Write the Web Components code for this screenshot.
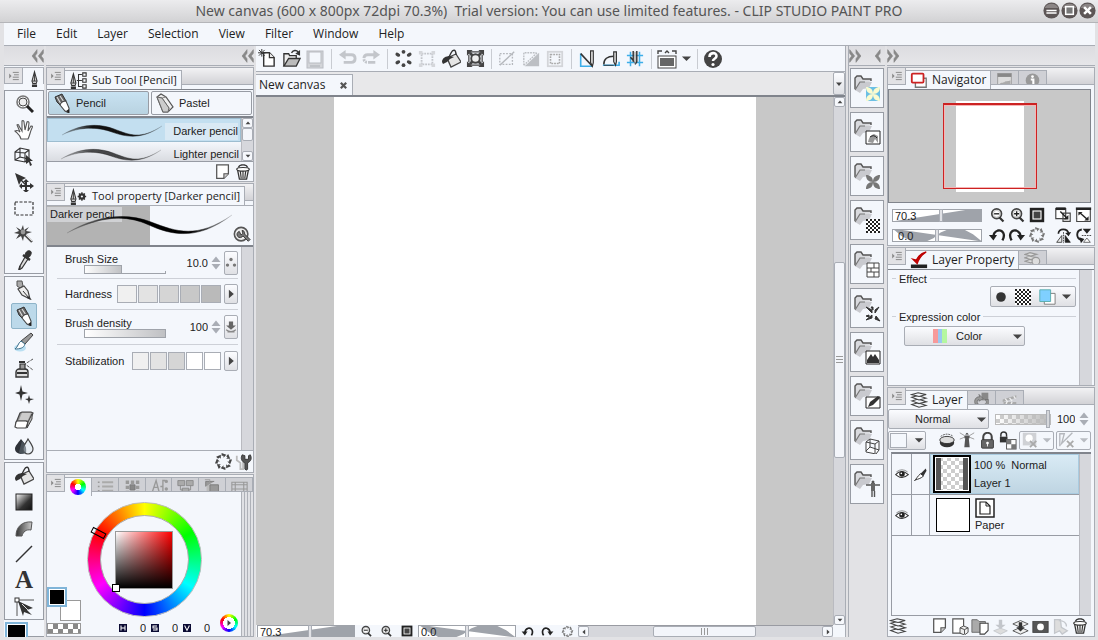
<!DOCTYPE html>
<html lang="en">
<head>
<meta charset="utf-8">
<meta name="viewport" content="width=device-width, initial-scale=1">
<title>CLIP STUDIO PAINT PRO</title>
<style>
  html, body { height: 100%; margin: 0; }
  body {
    --face: #f4f7fc; --line: #a9adb5; --dark: #80848c; --rail: #d6d7dc; --dock: #e2e2e5; --ink: #222;
    font: 12px/16px "Open Sans", "Noto Sans", sans-serif; color: var(--ink);
  }
</style>
</head>
<body>
<studio-app></studio-app>
<script>
const BASE = `*{box-sizing:border-box}
button,select,input{font:inherit;color:inherit;margin:0;padding:0;border:0;background:none;border-radius:0;appearance:none;outline:0}
button{display:flex;align-items:center;justify-content:center}
ul{list-style:none;margin:0;padding:0}
:host{display:block}
.ms{font-family:"Liberation Sans",Arial,sans-serif;font-size:11px}
.btn{border:1px solid #a9adb5;border-radius:2px;background:linear-gradient(#fbfcff,#dfe0e4)}
`;
function define(name, css, html, setup) {
  const t = document.createElement('template');
  t.innerHTML = `<style>${BASE}${css}</style>${html}`;
  customElements.define(name, class extends HTMLElement {
    constructor() {
      super();
      this.attachShadow({ mode: 'open' }).append(t.content.cloneNode(true));
    }
    connectedCallback() { if (setup) setup.call(this, this.shadowRoot); }
  });
}

/* ---------- icons ---------- */
const FOLDER = '<path d="M1 14V3l2-2h4l2 3h8v2" fill="#d9dade" stroke="#555" stroke-width="1.4"/><path d="M1 15L5 7h13l-3 6-6 1-3 4z" fill="#c9cacf"/><path d="M1 15L6 7h5" fill="none" stroke="#777" stroke-width="1.2"/>';
const TUBE = '<path d="M7 13l3-11 3 11-1 3H8z" fill="#ccc" stroke="#333" stroke-width="1.2"/><path d="M10 3v10M7 13h6" stroke="#333"/><path d="M7 17h6v3H7z" fill="#333"/>';
const LENS = '<circle cx="9" cy="8" r="5.7" fill="#fff" stroke="#444" stroke-width="2"/><circle cx="9" cy="8" r="4" fill="none" stroke="#999" stroke-width=".6"/><path d="M12 12l5 5" stroke="#333" stroke-width="2.6"/>';
const CROSS4 = c => `<g fill="${c}"><path d="M12 12c4 0 7 2 7 7-5 0-7-3-7-7zM26 12c-4 0-7 2-7 7 5 0 7-3 7-7zM12 26c4 0 7-2 7-7-5 0-7 3-7 7zM26 26c-4 0-7-2-7-7 5 0 7 3 7 7z"/></g>`;
const checks = (x0, y0, n, s, c) => { let d = ''; for (let i = 0; i < n; i++) for (let j = 0; j < n; j++) if ((i + j) % 2 == 0) d += `M${x0 + i * s} ${y0 + j * s}h${s}v${s}h-${s}z`; return `<path d="${d}" fill="${c}"/>`; };
const ring = (c) => { let s = ''; for (let i = 0; i < 8; i++) s += `<path d="M8 1l5 2-3 3 0-2-2 0z" fill="${c}" transform="rotate(${i * 45} 10 10)"/>`; return s; };
const STACK = '<g fill="#f4f7fc" stroke="#444" stroke-width="1.2"><path d="M2 15l7-2 9 3-8 2z"/><path d="M2 11l7-2 9 3-8 2z"/><path d="M2 7l7-2 9 3-8 2z"/><path d="M2 4l7-2 9 2-8 2z"/></g>';
const PAGE = '<path d="M3 2h13v10l-5 5H3z" fill="#fff" stroke="#555" stroke-width="1.4"/><path d="M16 12h-5v5" fill="#ccc" stroke="#555" stroke-width="1.2"/>';
const ICONS = {
  zoom: '<circle cx="9" cy="8" r="6" fill="#fff" stroke="#777" stroke-width="1.6"/><circle cx="9" cy="8" r="4" fill="#eee" stroke="#444"/><path d="M13 12l6 6" stroke="#222" stroke-width="3"/>',
  hand: '<path d="M7 19c-1-4-3-5-6-8 2-1 4 0 5 1L3 5c1-1 2 0 2 1l3 5V1c1-1 2 0 2 1l1 8 2-8c1-1 2 0 2 1l-1 8 3-5c1 0 2 0 1 2-2 4-2 7-4 11z" fill="#fff" stroke="#555" stroke-width="1.1"/>',
  cube: '<path d="M1 6l5-4 9 2v9l-4 3-10-2zM1 6l10 1v9M11 7l4-3M6 2v9l9 2M6 11l-5 3" fill="none" stroke="#333" stroke-width="1.1"/><path d="M12 9l7 6-3 0 2 4-2 1-1-4-3 2z" fill="#333"/>',
  move: '<path d="M1 1l11 5-4 2 5 5-1 1-5-5-2 4z" fill="#333"/><path d="M12 7l3 3h-2v3h3v-2l4 3-4 3v-2h-3v3h2l-3 3-3-3h2v-3H8v2l-3-3 3-3v2h3v-3H9z" fill="#333"/>',
  marquee: '<rect x="1" y="4" width="18" height="13" fill="none" stroke="#333" stroke-width="1.2" stroke-dasharray="3 1.5"/>',
  wand: '<path d="M9 1l1 5 5-3-3 4 6 1-6 2 3 5-5-3-1 5-2-5-5 3 3-5-5-1 5-2-3-4 5 3z" fill="#444"/><circle cx="9" cy="8" r="2.4" fill="#999"/><path d="M11 11l7 7" stroke="#555" stroke-width="2.4"/><path d="M12 11l6 6" stroke="#ddd"/>',
  dropper: '<path d="M11 7l3 2-6 9-3 2 1-4z" fill="#ddd" stroke="#333" stroke-width="1.2"/><path d="M9 5l7 5" stroke="#333" stroke-width="2.4"/><path d="M11 6c0-3 2-6 5-5s0 6-2 7z" fill="#333" stroke="#333"/><path d="M5 20l1-4" stroke="#333" stroke-width="1.6"/>',
  pen: '<path d="M3 1h5l1 5-3 2-3-2z" fill="#aaa" stroke="#555"/><path d="M4 9l6-3 4 5 2 8-8-4z" fill="#eee" stroke="#444" stroke-width="1.2"/><path d="M9 11l6 7" stroke="#333"/><path d="M14 16l4 4-5-2z" fill="#333"/>',
  pencil: '<path d="M3 4l7-3 4 7-6 4-3-3z" fill="#666" stroke="#333"/><path d="M5 4l4 7M8 3l4 6" stroke="#ddd" stroke-width="1.2"/><path d="M8 12c1-3 3-4 6-4l3 7v5l-4-2z" fill="#fff" stroke="#444" stroke-width="1.1"/><path d="M14 18l3-2v4z" fill="#222"/>',
  brush: '<ellipse cx="6" cy="16" rx="6" ry="3.5" fill="#b9dff2"/><path d="M17 1l2 2-8 9-4-3z" fill="#999" stroke="#444"/><path d="M7 9l4 3c-1 4-5 5-10 5 3-2 3-6 6-8z" fill="#fff" stroke="#3e6f8a"/>',
  air: '<path d="M2 14c0-2 2-3 3-3h6c2 0 3 1 3 3v5H2z" fill="#ddd" stroke="#333" stroke-width="1.4"/><path d="M6 6h5v5H6z" fill="#999" stroke="#333" stroke-width="1.2"/><path d="M5 4h6M3 15h10" fill="none" stroke="#333" stroke-width="1.8"/><path d="M19 1l-8 5 8 6" fill="none" stroke="#555" stroke-dasharray="3 1"/>',
  sparkle: '<path d="M7 1l1.5 6.500L14 9l-5.500 1.500L7 17l-1.500-6.500L1 9l4.500-1.500zM15 11l1 3.500 4 .5-4 1.500-1 3.500-1-3.500-3-1.500 3-.5z" fill="#333"/>',
  eraser: '<path d="M6 3l2-1h9l2 1-4 10H2z" fill="#999" stroke="#444" stroke-width="1.2"/><path d="M8 3h9l-3 7H5z" fill="#ccc"/><path d="M2 12l1-1h9l2 1-2 6H3l-2-1z" fill="#fff" stroke="#444" stroke-width="1.2"/><path d="M14 12l4-8v5l-5 9z" fill="#bbb" stroke="#444"/>',
  drops: '<path d="M7 3c4 5 6 7 6 10a6 5 0 01-12 0c0-3 3-6 6-10z" fill="#2e3238"/><path d="M14 3c3 5 5 7 5 10a5 5 0 01-10 0c0-3 3-6 5-10z" fill="#e8eef4" stroke="#444" stroke-width="1.2"/><path d="M8 5c3 4 5 6 4 12-4 2-6 1-7-1z" fill="#566068" opacity=".7"/>',
  bucket: '<path d="M6 9l9-4 5 8-10 5z" fill="#e5e5e5" stroke="#444" stroke-width="1.3"/><path d="M15 6c0-6-3-6-5-2l-2 4" fill="none" stroke="#333" stroke-width="1.4"/><path d="M1 13c0-4 4-6 8-6l4 1-4 2-3 3-4 2z" fill="#333"/>',
  gradient: '<defs><linearGradient id="g" x1="0" y1="0" x2="1" y2="1"><stop offset="0" stop-color="#fff"/><stop offset=".6" stop-color="#333"/><stop offset="1" stop-color="#111"/></linearGradient></defs><rect x="2" y="2" width="16" height="16" fill="url(#g)" stroke="#222"/>',
  curve: '<defs><linearGradient id="g"><stop offset="0" stop-color="#333"/><stop offset="1" stop-color="#ccc"/></linearGradient></defs><path d="M2 18C2 9 8 3 18 4l-1 8c-5-1-8 2-9 6z" fill="url(#g)" stroke="#555"/>',
  line: '<path d="M2 18L18 2" stroke="#333" stroke-width="1.4"/>',
  node: '<path d="M3 20V4h17" fill="none" stroke="#555"/><rect x="1" y="2" width="4" height="4" fill="#fff" stroke="#333"/><path d="M4 5l15 7-6 2 5 5-8-3-1 4z" fill="#333"/><path d="M8 8l6 6" stroke="#ddd"/>',
  nib: TUBE,
  nibtree: TUBE + '<path d="M20 3h-4v14h4M14 10h6" fill="none" stroke="#333" stroke-width="1.2"/><path d="M21 1h4v4h-4zM21 8h4v4h-4zM21 15h4v4h-4z" fill="none" stroke="#333" stroke-width="1.3"/>',
  nibgear: TUBE + '<circle cx="20" cy="10" r="2.6" fill="none" stroke="#333" stroke-width="2.6"/><path d="M20 5v2M20 13v2M15 10h2M23 10h2M16.500 6.500l1.500 1.500M22 12l1.500 1.500M16.500 13.500l1.500-1.500M22 8l1.500-1.500" stroke="#333" stroke-width="1.6"/>',
  pastel: '<path d="M2 4l4-3 5 3 7 10-5 5H8z" fill="#eee" stroke="#555" stroke-width="1.2"/><path d="M2 4l5 1 7 10-1 4M7 5l4-1" fill="none" stroke="#888"/><path d="M2 4l5 1 7 10-1 4H8z" fill="#ccc" stroke="#666"/>',
  sheet: PAGE,
  trash: '<path d="M4 8h12l-2 10H6z" fill="#eee" stroke="#333" stroke-width="1.4"/><path d="M7 9l1 8M10 9v8M13 9l-1 8" stroke="#333" stroke-width="1.2"/><ellipse cx="10" cy="7" rx="7" ry="2" fill="#fff" stroke="#333" stroke-width="1.3"/><path d="M5 5c1-4 9-4 10 0M8 2h4" fill="none" stroke="#333" stroke-width="1.5"/>',
  wrenchc: '<circle cx="9" cy="9" r="7.500" fill="#eee" stroke="#555" stroke-width="1.8"/><path d="M7 6a3.500 3.500 0 104 5l6 6 2-2-6-6c0-3-1-4-3-4l1 3-2 2z" fill="#777" stroke="#333"/>',
  dots: '<g fill="#777"><circle cx="10" cy="5" r="2.4"/><circle cx="5" cy="13" r="2.400"/><circle cx="15" cy="13" r="2.400"/></g>',
  play: '<path d="M7 4l7 6-7 6z" fill="#444"/>',
  downpen: '<path d="M7 2h6v6h4l-7 6-7-6h4z" fill="#666"/><path d="M3 14q7 5 14 0M5 17h10" fill="none" stroke="#888" stroke-width="1.600"/>',
  reset: ring('#444'), resetf: ring('#777'),
  wrenches: '<path d="M2 3v5l4 3v7h3V9" fill="none" stroke="#bbb" stroke-width="2"/><path d="M8 2c-2 4-1 7 3 9v7q2 2 3 0v-7c4-2 5-5 3-9l-2 1v4h-4V3z" fill="#555" stroke="#333"/>',
  bars: '<path d="M1 5h2M1 10h2M1 15h2" stroke="#999" stroke-width="2"/><path d="M6 5h13M6 10h13M6 15h13" stroke="#aaa" stroke-width="2.4"/>',
  swatches: '<path d="M2 3h4v4H2zM8 3h4v4H8zM14 3h4v4h-4zM2 9h4v4H2zM14 9h4v4h-4zM2 15h4v3H2zM8 15h4v3H8zM14 15h4v3h-4z" fill="#999"/><path d="M7 8h6v6H7z" fill="#888" stroke="#777"/>',
  mixtab: '<path d="M1 18l5-15 4 15M4 11h4M17 3h-3v14h3M11 10h3" fill="none" stroke="#999" stroke-width="1.600"/><circle cx="18" cy="4" r="2" fill="#999"/><circle cx="18" cy="13" r="2" fill="#999"/>',
  grids: '<path d="M1 3h8v6H1zM11 3h8v6h-8zM6 12h8v6H6z" fill="#aaa" stroke="#888"/><path d="M4 9v5h3M16 9v5h-3" fill="none" stroke="#888"/>',
  history: '<path d="M3 8h14v10H3z" fill="#bbb"/><path d="M2 10V4h10M7 8h10v10H7z" fill="#999" stroke="#777"/><path d="M1 2l6 0-1 5" fill="none" stroke="#999"/>',
  film: '<path d="M1 5h18v11H1zM1 8h18M1 13h18M5 5v11M15 5v11" fill="none" stroke="#999" stroke-width="1.300"/>',
  newf: '<path d="M6 4h6l5 5v9H6z" fill="#fff" stroke="#333" stroke-width="1.500"/><path d="M12 4v5h5" fill="#eee" stroke="#333" stroke-width="1.300"/><path d="M4 0v8M0 4h8M1 1l6 6M7 1L1 7" stroke="#333"/>',
  open: '<path d="M2 18V5h5l1 2h7v4" fill="#eee" stroke="#333" stroke-width="1.400"/><path d="M2 18l5-8h12l-4 8z" fill="#bbb" stroke="#333" stroke-width="1.400"/><path d="M10 4c2-3 5-3 7-1" fill="none" stroke="#333" stroke-width="1.500"/><path d="M19 1v6l-5-2z" fill="#333"/>',
  save: '<rect x="2" y="2" width="16" height="17" fill="#d3d5d9" stroke="#b9bcc2"/><rect x="4" y="3" width="12" height="11" fill="#f4f7fc" stroke="#b9bcc2"/><path d="M5 16h10v2H5z" fill="#bfc2c7"/>',
  undo: '<path d="M6 6h8q4 0 4 4t-4 4H6" fill="none" stroke="#c3c6cb" stroke-width="3"/><path d="M8 1v10L1 6z" fill="#c3c6cb"/>',
  redo: '<path d="M14 6H6Q2 6 2 10t4 4h8" fill="none" stroke="#c3c6cb" stroke-width="3" stroke-dasharray="14 1 2 1 2 1"/><path d="M12 1v10l7-5z" fill="#c3c6cb"/>',
  spin: '<g fill="#444"><circle cx="10" cy="3" r="2"/><circle cx="10" cy="17" r="2"/><ellipse cx="4" cy="6" rx="2.700" ry="1.800" transform="rotate(30 4 6)"/><ellipse cx="16" cy="6" rx="2.700" ry="1.800" transform="rotate(-30 16 6)"/><ellipse cx="4" cy="14" rx="2.700" ry="1.800" transform="rotate(-30 4 14)"/><ellipse cx="16" cy="14" rx="2.700" ry="1.800" transform="rotate(30 16 14)"/></g>',
  frame: '<path d="M4 4h12v12H4z" fill="none" stroke="#c3c6cb" stroke-width="2" stroke-dasharray="2 1"/><path d="M1 1h4v4H1zM15 1h4v4h-4zM1 15h4v4H1zM15 15h4v4h-4z" fill="#d5d7db"/>',
  xform: '<path d="M4 4l3 3M16 4l-3 3M4 16l3-3M16 16l-3-3" stroke="#444" stroke-width="3"/><path d="M5 3h10M5 17h10M3 6v8M17 6v8" stroke="#444" stroke-width="1.300"/><circle cx="10" cy="10" r="4.500" fill="#eee" stroke="#444" stroke-width="2"/><path d="M1 1h6L1 7zM19 1h-6l6 6zM1 19h6l-6-6zM19 19h-6l6-6z" fill="#444"/>',
  selx: '<rect x="2" y="4" width="14" height="12" fill="none" stroke="#b5b8bd" stroke-width="1.500" stroke-dasharray="2 1.500"/><path d="M2 17L18 2" stroke="#b5b8bd" stroke-width="1.500"/>',
  seli: '<path d="M3 18L19 3v15z" fill="#bcbfc4"/><path d="M2 17V3h14M2 17L17 3" fill="none" stroke="#bcbfc4" stroke-width="1.500" stroke-dasharray="2 1"/>',
  selb: '<rect x="2" y="2" width="16" height="16" fill="none" stroke="#d3d5d9" stroke-width="2"/><rect x="5" y="5" width="10" height="10" fill="none" stroke="#aaa" stroke-width="1.800" stroke-dasharray="2 1"/>',
  ruler: '<path d="M3 4v14h13" fill="none" stroke="#3daee9" stroke-width="1.800"/><path d="M3 4l13 14" stroke="#333" stroke-width="1.800"/><path d="M14 1h3v13l-1 4-2-4z" fill="#eee" stroke="#333" stroke-width="1.300"/>',
  sruler: '<path d="M1 17h18v-4" fill="none" stroke="#3daee9" stroke-width="1.800"/><path d="M2 16c0-6 4-9 11-9" fill="none" stroke="#333" stroke-width="1.700"/><path d="M2 17h11" stroke="#333"/><path d="M13 2h3v11l-1 4-2-4z" fill="#ddd" stroke="#333" stroke-width="1.300"/>',
  grid: '<path d="M1 6h18M1 14h18M5 2v16M15 2v16" stroke="#3daee9" stroke-width="1.700"/><path d="M5 8l5 6M8 1v12M12 1v12l-2 3" fill="none" stroke="#333" stroke-width="1.600"/><path d="M9 2h2v10l-1 4-1-4z" fill="#bbb"/>',
  board: '<path d="M1 5V2h4M15 2h4v3M8 4l2-2 2 2" fill="none" stroke="#444" stroke-width="1.400"/><rect x="1" y="7" width="18" height="12" fill="#fff" stroke="#444"/><rect x="3" y="9" width="14" height="8" fill="#666"/>',
  arrow: '<path d="M3 7h14l-7 7z" fill="#444"/>', arrowg: '<path d="M3 7h14l-7 7z" fill="#b9bcc2"/>',
  help: '<circle cx="10" cy="10" r="9" fill="#444"/><path d="M6.500 8c0-5 7-5 7-1 0 3-3.500 2.500-3.500 5" fill="none" stroke="#fff" stroke-width="2.600"/><circle cx="10" cy="15.500" r="1.600" fill="#fff"/>',
  close: '<path d="M4 4l12 12M16 4L4 16" stroke="#555" stroke-width="5"/>',
  wmin: '<circle cx="10" cy="10" r="9.500" fill="#5d5656"/><path d="M2 7a9 9 0 0116 0z" fill="#8b8585"/><path d="M4 10h12M4 13h12" stroke="#fff" stroke-width="1.600"/>',
  wmax: '<circle cx="10" cy="10" r="9.500" fill="#5d5656"/><path d="M2 7a9 9 0 0116 0z" fill="#8b8585"/><rect x="5.500" y="5.500" width="9" height="9" fill="#777" stroke="#fff" stroke-width="1.800"/>',
  wclose: '<circle cx="10" cy="10" r="9.500" fill="#5d5656"/><path d="M2 7a9 9 0 0116 0z" fill="#8b8585"/><path d="M6 6l8 8M14 6l-8 8" stroke="#fff" stroke-width="3"/>',
  menu: '<path d="M2 6v8l4-4z" fill="#888"/><path d="M8 4h10M10 8h8M8 12h10M8 16h10" stroke="#888" stroke-width="1.600"/>',
  cl: '<path d="M10 1L3 10l7 9V14L7 10l3-4zM19 1l-7 9 7 9V14l-3-4 3-4z" fill="#888" stroke="#888"/>',
  cr: '<path d="M1 1l7 9-7 9V14l3-4-3-4zM10 1l7 9-7 9V14l3-4-3-4z" fill="#888" stroke="#888"/>',
  c1: '<path d="M13 1l-7 9 7 9V14l-3-4 3-4z" fill="#888" stroke="#888"/>',
  zout: LENS + '<path d="M6 8h6" stroke="#222" stroke-width="1.600"/>',
  zin: LENS + '<path d="M6 8h6M9 5v6" stroke="#222" stroke-width="1.600"/>',
  fit: '<rect x="1" y="1" width="18" height="18" fill="#222"/><rect x="5" y="5" width="10" height="10" fill="#444" stroke="#fff" stroke-width="1.400"/>',
  rotl: '<path d="M16 16c4-7 0-12-5-11-3 1-5 4-5 7" fill="none" stroke="#222" stroke-width="2.600"/><path d="M1 10h9l-4 6z" fill="#222"/>',
  rotr: '<path d="M4 16C0 9 4 4 9 5c3 1 5 4 5 7" fill="none" stroke="#222" stroke-width="2.600"/><path d="M19 10h-9l4 6z" fill="#222"/>',
  win1: '<path d="M2 3h11v11H2zM10 8h8v9h-8z" fill="#fff" stroke="#444" stroke-width="1.300"/><path d="M2 3h11" stroke="#222" stroke-width="3"/><path d="M7 6l7 7" stroke="#222" stroke-width="1.600"/><path d="M16 15v-5l-5 5z" fill="#222"/>',
  win2: '<path d="M2 3h16v14H2z" fill="#fff" stroke="#444" stroke-width="1.300"/><path d="M1 2h18" stroke="#222" stroke-width="3"/><path d="M6 7l9 8" stroke="#222" stroke-width="1.700"/><path d="M4 6h5l-5 4zM16 16v-5l-5 5z" fill="#222"/>',
  fliph: '<path d="M4 8c0-7 11-7 12 0" fill="none" stroke="#222" stroke-width="2"/><path d="M19 6l-3 5-4-4z" fill="#222"/><path d="M8 10v8H2zM12 10v8h6z" fill="#eee" stroke="#333"/><path d="M12 10v8h6z" fill="#222"/><path d="M10 6v13" stroke="#333" stroke-dasharray="2 1"/>',
  flipv: '<path d="M8 3C1 4 1 13 7 15" fill="none" stroke="#222" stroke-width="2.200"/><path d="M5 12l6 2-4 5z" fill="#222"/><path d="M9 2h10l-5 6z" fill="#222"/><path d="M10 18h8l-4-5z" fill="#fff" stroke="#555"/><path d="M8 10h12" stroke="#333" stroke-dasharray="2 1"/>',
  navtab: '<path d="M6 8h12v10H6z" fill="#fff" stroke="#777" stroke-width="1.500"/><rect x="2" y="3" width="13" height="10" rx="1" fill="#fff" stroke="#c22" stroke-width="2"/>',
  picture: '<rect x="2" y="3" width="16" height="15" fill="#ddd" stroke="#999"/><path d="M2 3h16v4H2z" fill="#888"/><path d="M3 17c3-5 5-2 7-4s4 0 7-2v6z" fill="#aaa"/>',
  info: '<circle cx="10" cy="11" r="8" fill="#999"/><path d="M8 10h3v6" fill="none" stroke="#fff" stroke-width="2.500"/><circle cx="10" cy="6.500" r="1.600" fill="#fff"/>',
  check: '<path d="M1 15h18v4H1z" fill="#222"/><path d="M3 9l5 5C10 8 13 4 18 1 13 2 9 6 7 10z" fill="#c00" stroke="#b00" stroke-width="1.400"/>',
  stack: STACK,
  stackg: '<g fill="#ddd" stroke="#999" stroke-width="1.300"><path d="M1 4l6-2 8 2-7 2zM1 8l6-2 8 2-7 2zM1 12l6-2 8 2-7 2z"/><circle cx="14" cy="12" r="4.500"/></g>',
  cyc: '<path d="M10 2h8v9h-8z" fill="#888"/><path d="M3 16c-3-5 1-10 5-9l-1-3 5 5-5 3 0-2c-2 0-3 3-1 5zM12 16c4 0 5-4 2-6l4 0v6l-4 3z" fill="#999" stroke="#666" stroke-width=".8"/>',
  clap: '<path d="M2 10l16-5v3L2 13zM3 13h15v6H3z" fill="#aaa"/><path d="M5 9l3 4M10 8l3 4M15 6l2 3M7 13l-2 5M13 13l-2 5" stroke="#eee" stroke-width="1.600"/>',
  tone: '<circle cx="10" cy="10" r="6" fill="#333"/>',
  check4: '<path d="M2 2h16v16H2z" fill="#fff"/>' + checks(2, 2, 8, 2, '#222'),
  border: '<path d="M7 6h12v12H7z" fill="#fff" stroke="#777"/><path d="M2 2h12v13H2z" fill="#7fd0ff" stroke="#5aa"/>',
  clip: '<ellipse cx="10" cy="13" rx="8" ry="5" fill="#333"/><ellipse cx="10" cy="10" rx="8" ry="4" fill="#ddd" stroke="#333"/><path d="M3 6q7-5 14 0" fill="none" stroke="#444" stroke-dasharray="2 1"/>',
  tower: '<path d="M8 8h4l1 10H7zM7 5h6v3H7z" fill="#555"/><path d="M8 4l2-2 2 2z" fill="#333"/><path d="M7 5L2 2M7 7L2 9M13 5l5-3M13 7l5 2" stroke="#999"/>',
  lock: '<path d="M5 10V6a5 5 0 0110 0v4" fill="none" stroke="#444" stroke-width="2.400"/><rect x="3" y="9" width="14" height="10" rx="1" fill="#666" stroke="#333"/><circle cx="10" cy="13" r="1.600" fill="#fff"/><path d="M10 13v4" stroke="#fff"/>',
  locka: '<path d="M3 6V4a3 3 0 016 0v2" fill="none" stroke="#333" stroke-width="1.500"/><rect x="2" y="6" width="8" height="6" fill="#333"/><rect x="9" y="9" width="10" height="10" fill="#fff" stroke="#555"/><path d="M9 9h5v5H9zM14 14h5v5h-5z" fill="#777"/>',
  maskx: '<rect x="2" y="2" width="15" height="14" fill="#cfd1d5"/><circle cx="9" cy="8" r="4" fill="#fff"/><path d="M10 11l7 7M17 11l-7 7" stroke="#aaa" stroke-width="2"/>',
  rulerx: '<path d="M2 17V3h5L4 14 16 2" fill="none" stroke="#b5b8bd" stroke-width="1.500"/><path d="M10 11l7 7M17 11l-7 7" stroke="#aaa" stroke-width="2"/>',
  eye: '<path d="M1 11q8-9 18 0-8 7-15 2z" fill="#fff" stroke="#333" stroke-width="1.500"/><circle cx="10" cy="10" r="4" fill="#222"/><circle cx="9" cy="9" r="1.200" fill="#fff"/><path d="M2 7q8-6 16 0" fill="none" stroke="#666"/>',
  edit: '<path d="M2 18c2-1 4-6 8-9l4 3c-3 3-7 4-10 5z" fill="#fff" stroke="#333" stroke-width="1.300"/><path d="M10 9l7-7 1 3-4 7z" fill="#333"/>',
  paper: '<rect x="1" y="1" width="18" height="18" fill="#fff" stroke="#222" stroke-width="1.500"/><path d="M5 4h6l4 4v8H5z" fill="#fff" stroke="#222" stroke-width="1.200"/><path d="M11 4v4h4" fill="none" stroke="#222"/>',
  newcube: '<path d="M2 2h12v16H2z" fill="#fff" stroke="#555" stroke-width="1.300"/><path d="M10 12l4-2 5 2v5l-4 3-5-2zM10 12l5 2v5M15 14l4-2" fill="#eee" stroke="#444"/>',
  folder: '<path d="M1 17V3h6l2 2h7v12z" fill="#aaa" stroke="#666"/><path d="M10 7h9v8l-4 4h-5z" fill="#fff" stroke="#444" stroke-width="1.200"/>',
  xferg: '<path d="M2 15l8-3 8 3-8 4z" fill="#ddd" stroke="#c3c6cb"/><path d="M8 2h4v6h4l-6 5-6-5h4z" fill="#c3c6cb"/>',
  xfer: '<path d="M1 15l9-4 9 4-9 4zM1 7l9-4 9 4-9 4z" fill="#eee" stroke="#444"/><path d="M8 5h4v6h3l-5 5-5-5h3z" fill="#333"/>',
  mask: '<rect x="1" y="4" width="18" height="13" fill="#555" stroke="#444"/><circle cx="10" cy="10.500" r="4" fill="#fff"/>',
  applym: '<path d="M3 2h7l1 9 7 4-6 4-3-4-6 3z" fill="#ddd" stroke="#c3c6cb" stroke-width="1.500"/><path d="M8 3c6 0 9 3 9 7" fill="none" stroke="#c3c6cb" stroke-width="1.500"/>',
  H: '<path d="M0 0h20v20H0z" fill="#0a0a33"/><path d="M5 4v12M15 4v12M5 10h10" stroke="#fff" stroke-width="2.600"/>',
  S: '<path d="M0 0h20v20H0z" fill="#0a0a33"/><path d="M15 5H5v5h10v5H5" fill="none" stroke="#fff" stroke-width="2.600"/>',
  V: '<path d="M0 0h20v20H0z" fill="#0a0a33"/><path d="M4 4l6 12 6-12" fill="none" stroke="#fff" stroke-width="2.600"/>',
  m1: FOLDER + '<path d="M12 12h14v14H12z" fill="#6cc0e4"/>' + CROSS4('#fbfbd0'),
  m2: FOLDER + '<path d="M12 12h14v13H12z" fill="#fff" stroke="#222"/><path d="M14 23c1-5 3-7 6-8l4 2v7l-3-4-2 4z" fill="#999"/><path d="M16 18q4-3 7 1" fill="none" stroke="#222"/>',
  m3: FOLDER + CROSS4('#777'),
  m4: FOLDER + '<path d="M12 12h14v14H12z" fill="#fff"/>' + checks(12, 12, 7, 2, '#222'),
  m5: FOLDER + '<path d="M13 12h12v14H13zM13 17h12M13 21h12M20 12v5M17 17v4M20 21v5" fill="#fff" stroke="#444"/>',
  m6: FOLDER + '<path d="M12 12l6 3 0 3zM25 12l-4 3 0 3zM12 25l6-2 0-3zM26 26l-5-2 1-3zM17 12l2 0 0 3zM15 20l-3 1 3 1z" fill="#333" stroke="#333"/>',
  m7: FOLDER + '<path d="M12 12h14v13H12z" fill="#fff" stroke="#222"/><path d="M13 24v-3l4-6 2 3 2-3 4 6v3z" fill="#333"/>',
  m8: FOLDER + '<path d="M12 14h14v11H12z" fill="#fff" stroke="#222"/><path d="M14 24l2-5 8-6 2 2-7 7z" fill="#333"/>',
  m9: FOLDER + '<path d="M12 15l4-3 9 2v9l-3 4-10-2zM12 15l9 2 4-3M21 17v9M16 12v8l9 3M16 20l-4 4" fill="#fff" fill-opacity=".6" stroke="#444"/>',
  m10: FOLDER + '<circle cx="19" cy="11" r="1.500" fill="#555"/><path d="M12 14h14" stroke="#555" stroke-width="1.500"/><path d="M19 12v8" stroke="#666" stroke-width="4"/><path d="M18 26v-6M20.500 26v-6" stroke="#555" stroke-width="1.400"/>',
  su: '<path d="M4 13l6-7 6 7z" fill="#444"/>', sd: '<path d="M4 7l6 7 6-7z" fill="#444"/>',
  sl: '<path d="M13 4l-7 6 7 6z" fill="#444"/>', sr: '<path d="M7 4l7 6-7 6z" fill="#444"/>',
  gup: '<path d="M1 16L10 5l9 11z" fill="#a9adb5"/>', gdn: '<path d="M1 4l9 11 9-11z" fill="#a9adb5"/>'
};
/* icons whose artwork is not on the 20-unit square: [x, width, height] */
const BOXES = { nibtree: [5, 22, 20], nibgear: [5, 22, 20] };
customElements.define('cs-icon', class extends HTMLElement {
  constructor() { super(); this.attachShadow({ mode: 'open' }); }
  connectedCallback() {
    const n = this.getAttribute('name'), s = +(this.getAttribute('size') || 20);
    const [x, w, h] = BOXES[n] || (/^m\d/.test(n) ? [0, 27, 27] : [0, 20, 20]);
    this.shadowRoot.innerHTML = `<style>:host{display:block;flex:none;line-height:0}svg{display:block}</style><svg aria-hidden="true" width="${Math.round(s * w / h)}" height="${s}" viewBox="${x} 0 ${w} ${h}">${ICONS[n] || ''}</svg>`;
  }
});
const I = (n, s = 20) => `<cs-icon name="${n}" size="${s}"></cs-icon>`;
const B = (label, n, s = 20, c = '') => `<button type="button" aria-label="${label}" class="${c}">${I(n, s)}</button>`;

/* ---------- shared parts ---------- */
define('dock-strip', `
:host{height:20px;flex:none;background:linear-gradient(#dcdce0,#e6e6e9);border-bottom:1px solid var(--line);display:flex;align-items:center;justify-content:space-between;padding:0}`,
`<slot></slot>`);

define('panel-frame', `
:host{display:flex;flex-direction:column;border:1px solid var(--line);background:var(--face);min-height:0}
.bar{display:flex;flex:none;height:17px;background:linear-gradient(#f2f2f4,#d2d2d6);border-bottom:1px solid var(--line)}
.menu{width:18px;height:16px;border-right:1px solid var(--line);background:#e2e2e5;flex:none}
.title{height:19px;margin-top:2px;background:var(--face);border:1px solid var(--line);border-width:1px 1px 0 0;padding:0 4px;display:flex;align-items:center;gap:4px;white-space:nowrap;flex:none;font-size:var(--title-size,12px)}
.body{margin-top:var(--pad,4px);flex:1;min-height:0;display:flex;flex-direction:column}`,
`<div class="bar"><button class="menu" type="button" aria-label="Panel menu">${I('menu', 12)}</button><div class="title"><slot name="title"></slot></div><slot name="tabs"></slot></div><div class="body"><slot></slot></div>`);

define('side-tab', `
:host{flex:0 1 28px;min-width:0;overflow:hidden;height:14px;margin-top:2px;background:#cfd0d5;border:1px solid var(--line);border-width:1px 1px 0 0}
button{width:27px;height:13px;overflow:hidden;align-items:flex-start}`,
`<button type="button"><cs-icon></cs-icon></button>`, function (r) {
  r.querySelector('button').setAttribute('aria-label', this.getAttribute('label'));
  const i = document.createElement('cs-icon'); i.setAttribute('name', this.getAttribute('icon')); i.setAttribute('size', 17);
  r.querySelector('cs-icon').replaceWith(i);
});

define('scroll-rail', `
:host{display:flex;flex-direction:column;width:12px;flex:none;background:var(--rail);border-left:1px solid #b9bac0}
:host([row]){flex-direction:row;width:auto;height:12px;flex:1;border-left:0;border-top:1px solid #999ba2}
button{flex:none;height:10px;border:1px solid var(--line);border-radius:2px;background:#f6f8fc}
:host([row]) button{width:11px;height:11px}
.a{flex:var(--a,0)}.t{flex:var(--t,1);border:1px solid var(--line);border-radius:2px;background:#f3f5fa;display:grid;place-items:center}.b{flex:var(--b,1)}
.t i{display:none;width:7px;height:7px;background:repeating-linear-gradient(#999 0 1px,transparent 1px 3px)}
:host([row]) .t i{background:repeating-linear-gradient(90deg,#999 0 1px,transparent 1px 3px)}
:host([grip]) .t i{display:block}
:host([empty]) button,:host([empty]) .t{display:none}`,
`<button class="p" type="button" aria-label="Scroll back"></button><div class="a"></div><div class="t"><i></i></div><div class="b"></div><button class="n" type="button" aria-label="Scroll forward"></button>`,
function (r) {
  const row = this.hasAttribute('row');
  r.querySelector('.p').innerHTML = I(row ? 'sl' : 'su', 8);
  r.querySelector('.n').innerHTML = I(row ? 'sr' : 'sd', 8);
});

define('spin-arrows', `
:host{display:flex;flex-direction:column;gap:2px;width:10px;flex:none}button{height:6px;width:10px}`,
B('Increase', 'gup', 10) + B('Decrease', 'gdn', 10));

define('ramp-slider', `
:host{display:grid;grid-template:100%/100%;height:13px;flex:none;width:98px;overflow:hidden}
:host>*,.box,.ramp,input,span{grid-area:1/1}
.box{border:1px solid #9fa3aa;background:#fff}
.ramp{background:#9fa3aa;clip-path:polygon(0 100%,85% 8%,100% 8%,100% 100%)}
:host([arc]) .ramp{clip-path:polygon(0 0,4% 20%,10% 55%,20% 92%,20% 100%,38% 100%,46% 75%,54% 30%,62% 8%,80% 8%,90% 45%,100% 100%)}
input{width:100%;height:100%;min-width:0;z-index:1}
input::-webkit-slider-thumb{appearance:none;width:4px;height:13px;background:#e0e1e5;border:1px solid #a9adb5}
span{z-index:2;padding:0 0 0 3px;line-height:14px;pointer-events:none;justify-self:start}`,
`<div class="box"></div><div class="ramp"></div><input type="range" min="0" max="100"><span class="ms"><slot></slot></span>`,
function (r) { const i = r.querySelector('input'); i.value = this.getAttribute('value'); i.setAttribute('aria-label', this.getAttribute('label')); });

define('drop-select', `
:host{display:grid;height:20px;flex:none}
select,i,cs-icon{grid-area:1/1}
select{width:100%;padding-left:var(--indent,26px)}
cs-icon{place-self:center end;margin-right:1px;pointer-events:none}
i{place-self:center start;width:14px;height:14px;margin-left:29px;background:linear-gradient(90deg,#f79a9a 0 5px,#9ac8f0 5px 9px,#b4f7a0 9px);display:none;pointer-events:none}
:host([swatch]) i{display:block}`,
`<select class="btn ms"></select><i></i>${I('arrow', 13)}`,
function (r) {
  const s = r.querySelector('select'); s.setAttribute('aria-label', this.getAttribute('label'));
  s.innerHTML = `<option>${this.getAttribute('value')}</option>`;
});

/* ---------- window chrome ---------- */
define('title-bar', `
:host{height:23px;flex:none;background:linear-gradient(#ececee,#d2d2d4);border-bottom:1px solid #b4b5b9;display:flex;align-items:center;position:relative}
h1{flex:1;margin:0;text-align:center;font:400 14px/22px "Noto Sans","Open Sans",sans-serif;color:#555;white-space:pre}
.w{position:absolute;right:2px;top:2px;display:flex;gap:1px}.w button{width:17px;height:17px}`,
`<h1>New canvas (600 x 800px 72dpi 70.3%)  Trial version: You can use limited features. - CLIP STUDIO PAINT PRO</h1><div class="w">${B('Minimize', 'wmin', 17)}${B('Maximize', 'wmax', 17)}${B('Close', 'wclose', 17)}</div>`);

define('menu-bar', `
:host{height:23px;flex:none;margin:0 3px 0 4px;background:var(--face);border-bottom:1px solid var(--line)}
ul{display:flex;gap:20px;padding:3px 13px}a{color:#222;text-decoration:none}`,
`<nav><ul>${['File', 'Edit', 'Layer', 'Selection', 'View', 'Filter', 'Window', 'Help'].map(m => `<li><a href="#${m.toLowerCase()}">${m}</a></li>`).join('')}</ul></nav>`);

define('command-bar', `
:host{display:flex;align-items:center;gap:2px;height:26px;flex:none;background:var(--face);border-bottom:1px solid var(--line)}
button{width:22px;height:22px;flex:none}.arr{width:12px}
i{width:6px;height:20px;flex:none;background:linear-gradient(#c9ccd2,#c9ccd2) center/1px 100% no-repeat}`,
B('New', 'newf', 19) + B('Open', 'open', 19) + B('Save', 'save', 20) + '<i></i>' + B('Undo', 'undo', 19) + B('Redo', 'redo', 19) + '<i></i>' +
B('Clear', 'spin', 19) + B('Clear outside selection', 'frame', 18) + B('Fill', 'bucket', 20) + B('Scale and rotate', 'xform', 19) + '<i></i>' +
B('Deselect', 'selx', 18) + B('Invert selection', 'seli', 18) + B('Selection border', 'selb', 18) + '<i></i>' +
B('Snap to ruler', 'ruler', 18) + B('Snap to special ruler', 'sruler', 18) + B('Snap to grid', 'grid', 18) + '<i></i>' +
B('Assistant', 'board', 20) + B('More', 'arrow', 13, 'arr') + '<i></i>' + B('Help', 'help', 20));

/* ---------- tools ---------- */
const G1 = ['zoom', 'hand', 'cube', 'move', 'marquee', 'wand', 'dropper'], G2 = ['pen', 'pencil', 'brush', 'air', 'sparkle', 'eraser', 'drops'], G3 = ['bucket', 'gradient', 'curve', 'line', 'A', 'node'];
const tools = g => `<div class="g">${g.map(n => n == 'A' ? '<button type="button" class="txt">A</button>' : B(n, n, 20, n == 'pencil' ? 'on' : '')).join('')}</div>`;
define('tool-box', `
:host{display:flex;flex-direction:column;background:var(--face);overflow:hidden}
.h{display:flex;height:17px;flex:none;background:#e2e2e5;border:1px solid var(--line);margin:1px 0 6px}
.h .m{width:18px;border-right:1px solid var(--line)}.h .n{flex:1;height:20px;background:var(--face);padding-left:3px}
.g{border:1px solid #989ca4;margin-bottom:2px;display:flex;flex-direction:column;align-items:center;flex:none}
.g button{width:26px;height:26px}.g .on{width:26px;background:#bcd9ea;border:1px solid #8fb4c9;border-radius:2px}
.txt{font:700 25px/26px "Liberation Serif",serif;color:#333}
.sw{display:flex;align-items:flex-start;height:20px;overflow:hidden;padding-left:1px}
.fg{width:23px;height:23px;flex:none;border:2px solid #7fb4d8;background:#000;outline:1px solid #fff;outline-offset:-3px}.bg{flex:1;height:20px;margin-top:14px;border:1px solid #989ca4;background:#fff}`,
`<dock-strip><span></span>${I('cl', 14)}</dock-strip><div class="h"><button class="m" type="button" aria-label="Panel menu">${I('menu', 12)}</button><button class="n" type="button" aria-label="Tool">${I('nib', 17)}</button></div>${tools(G1)}${tools(G2)}${tools(G3)}<div class="sw"><button class="fg" type="button" aria-label="Main color"></button><button class="bg" type="button" aria-label="Sub color"></button></div>`);

const STROKE = (o, id) => `<svg class="st" width="100" height="16" viewBox="0 0 100 16" aria-hidden="true"><defs><linearGradient id="${id}"><stop offset="0" stop-color="#222" stop-opacity=".2"/><stop offset=".3" stop-color="#111" stop-opacity="${o}"/><stop offset=".7" stop-color="#111" stop-opacity="${o}"/><stop offset="1" stop-color="#222" stop-opacity=".2"/></linearGradient></defs><path d="M0 12C18 1 36 0 52 6S78 17 100 3C80 17 64 14 50 9S18 3 0 12z" fill="url(#${id})" stroke="url(#${id})" stroke-width=".5"/></svg>`;
define('sub-tool-panel', `
.tabs{display:flex;gap:2px;padding:1px;border-top:1px solid var(--dark);height:27px}
.tabs button{flex:1;justify-content:flex-start;gap:4px;padding-left:3px;border:1px solid #989ca4;border-radius:2px}
.tabs .on{background:linear-gradient(#c8e2f2,#b9d3e1)}
.list{display:flex;border-top:2px solid var(--dark);border-bottom:1px solid #989ca4;height:46px}
.rows{flex:1;overflow:hidden}
.row{width:100%;height:24px;justify-content:space-between;padding:2px 2px 0 14px;background:linear-gradient(#f4f7fc,#d4d6db);border-bottom:1px solid #b0b4bc}
.row.on{background:#c3dff0;border:1px solid #9dbdd0}.row .ms{padding-left:8px;line-height:17px}.row.on .ms{background:#d9e9f4}
.foot{display:flex;justify-content:flex-end;gap:2px;height:19px;align-items:center;padding-right:1px}.foot button{width:18px}`,
`<div class="tabs"><button type="button" class="on">${I('pencil', 20)}<span class="ms">Pencil</span></button><button type="button">${I('pastel', 20)}<span class="ms">Pastel</span></button></div>
<div class="list"><div class="rows"><button type="button" class="row on">${STROKE(1, 's')}<span class="ms">Darker pencil</span></button><button type="button" class="row">${STROKE(.75, 't')}<span class="ms">Lighter pencil</span></button></div><scroll-rail style="--a:0;--t:12;--b:10"></scroll-rail></div>
<div class="foot">${B('Duplicate sub tool', 'sheet', 18)}${B('Delete sub tool', 'trash', 18)}</div>`);

const boxes = a => `<span class="bx">${a.map(c => `<button type="button" aria-label="Level" style="background:${c}"></button>`).join('')}</span>`;
define('tool-property-panel', `
:host{display:flex;flex-direction:column;flex:1;min-height:0}
.pv{height:40px;flex:none;display:grid;background:linear-gradient(90deg,#b3b3b3 50%,var(--face) 50%);border-top:1px solid var(--line)}
.pv>*{grid-area:1/1}.pv span{background:#d0d1d4;justify-self:start;align-self:start;padding:0 7px 0 3px;margin-top:1px;line-height:15px}
.pv svg{justify-self:start;margin:7px 0 0 20px;z-index:1}.pv button{place-self:end;width:18px;height:20px;margin-right:2px}
.main{flex:1;display:flex;border-top:2px solid var(--dark);border-bottom:1px solid var(--line);min-height:0}
.rows{flex:1;min-width:0;padding:1px 3px 0 10px}
.r{height:31px;display:flex;align-items:center;padding:0 0 0 8px;border-bottom:1px solid #cdd0d7}
.r.t{height:35px}.r.last{border:0}
.l{display:flex;flex-direction:column;flex:1;align-items:flex-start}
.l input{width:82px;height:9px;margin-left:19px;border:1px solid #9fa3aa;background:linear-gradient(90deg,#fff,#bfc0c3)}
.l .short{border-width:0;background:linear-gradient(#9fa3aa,#9fa3aa) 100% 100%/1px 3px no-repeat,linear-gradient(#9fa3aa,#9fa3aa) 0 100%/100% 1px no-repeat,linear-gradient(#9fa3aa,#9fa3aa) 0 0/1px 100% no-repeat,linear-gradient(#9fa3aa,#9fa3aa) 37px 0/1px 100% no-repeat,linear-gradient(#9fa3aa,#9fa3aa) 0 0/38px 1px no-repeat,linear-gradient(90deg,#fff,#bfc0c3) 0 0/38px 100% no-repeat}
.l input::-webkit-slider-thumb{appearance:none;width:1px;height:7px}
.l label{line-height:12px}
.v{width:36px;text-align:right;margin-right:3px}
.s{width:14px;height:24px;margin-left:3px;flex:none}.p{height:20px}
.bx{display:flex;gap:1px;margin-left:auto}.bx button{width:20px;height:18px;border:1px solid var(--line)}.n .bx button{width:17px}
.foot{height:21px;flex:none;display:flex;justify-content:flex-end;align-items:center;gap:2px}`,
`<div class="pv"><svg width="166" height="24" viewBox="0 0 166 24" aria-hidden="true"><defs><linearGradient id="q"><stop offset="0" stop-color="#000" stop-opacity=".15"/><stop offset=".35" stop-color="#000"/><stop offset=".75" stop-color="#000"/><stop offset="1" stop-color="#000" stop-opacity=".15"/></linearGradient></defs><path d="M0 20C28 3 58 -1 84 9S130 26 165 2C132 27 106 23 82 12S34 3 0 20z" fill="url(#q)" stroke="url(#q)" stroke-width=".5"/></svg><span class="ms">Darker pencil</span>${B('Sub tool detail', 'wrenchc', 18)}</div>
<div class="main"><div class="rows">
<div class="r"><div class="l"><label class="ms" for="bs">Brush Size</label><input id="bs" class="short" type="range"></div><input class="v ms" aria-label="Brush size value" value="10.0"><spin-arrows></spin-arrows>${B('Pressure', 'dots', 14, 'btn s')}</div>
<div class="r"><span class="ms">Hardness</span>${boxes(['#f0f0f0', '#e3e3e3', '#d5d5d5', '#c8c8c8', '#bababa'])}${B('More', 'play', 14, 'btn s p')}</div>
<div class="r t"><div class="l"><label class="ms" for="bd">Brush density</label><input id="bd" type="range"></div><input class="v ms" aria-label="Brush density value" value="100"><spin-arrows></spin-arrows>${B('Pressure', 'downpen', 14, 'btn s')}</div>
<div class="r last n"><span class="ms">Stabilization</span>${boxes(['#f0f0f0', '#e3e3e3', '#d5d5d5', '#fff', '#fff'])}${B('More', 'play', 14, 'btn s p')}</div>
</div><scroll-rail empty></scroll-rail></div>
<div class="foot">${B('Reset', 'reset', 19)}${B('Settings', 'wrenches', 18)}</div>`);

define('color-panel', `
:host{display:flex;flex:1}
.c{flex:1;display:grid;height:144px}.c>*{grid-area:1/1}
.wheel{place-self:start center;margin-top:10px;width:115px;height:115px;border-radius:50%;background:conic-gradient(from -60deg,red,yellow,lime,aqua,blue,magenta,red);display:grid;place-items:center;border:1px solid #bbb;position:relative}
.in{width:89px;height:89px;border-radius:50%;background:var(--face);border:1px solid #aaa;display:grid;place-items:center}
.sq{width:58px;height:58px;border:1px solid #999;background:linear-gradient(transparent,#000),linear-gradient(90deg,#fff,#f00)}
.hue{position:absolute;left:3px;top:27px;width:15px;height:6px;border:1px solid #000;transform:rotate(28deg)}
.pt{position:absolute;left:24px;top:81px;width:8px;height:8px;background:#fff;border:1px solid #000}
.sw{place-self:end start;width:34px;height:47px;margin-bottom:2px;position:relative}
.fg{position:absolute;left:0;top:0;width:20px;height:20px;border:2px solid #7fb4d8;background:#000;outline:1px solid #fff;outline-offset:-3px;z-index:1}
.bg{position:absolute;left:13px;top:13px;width:21px;height:21px;border:1px solid #999;background:#fff}
.tr{position:absolute;left:0;top:36px;width:34px;height:11px;border:1px solid #999;background:repeating-conic-gradient(#888 0 25%,#fff 0 50%) 0 0/10px 10px}
.hsv{place-self:end start;display:flex;align-items:center;margin:0 0 1px 72px;height:14px}.hsv label{display:flex;align-items:center;width:32px}
.hsv input{width:19px;text-align:right}
.pk{place-self:end;width:18px;height:18px;margin:0 3px 4px 0;border-radius:50%;background:radial-gradient(#fff 6px,transparent 6px),conic-gradient(from -60deg,red,yellow,lime,aqua,blue,magenta,red)}
.e{width:12px;background:repeating-linear-gradient(90deg,#aeb1b8 0 1px,#e0e1e5 1px 3px)}`,
`<div class="c"><div class="wheel"><div class="in"><div class="sq"></div></div><i class="hue"></i><i class="pt"></i></div>
<div class="sw"><button class="fg" type="button" aria-label="Main color"></button><button class="bg" type="button" aria-label="Sub color"></button><button class="tr" type="button" aria-label="Transparent"></button></div>
<div class="hsv ms"><label>${I('H', 8)}<input value="0" aria-label="Hue"></label><label>${I('S', 8)}<input value="0" aria-label="Saturation"></label><label>${I('V', 8)}<input value="0" aria-label="Value"></label></div>
<button class="pk" type="button" aria-label="Switch color space">${I('play', 10)}</button></div><div class="e"></div>`);

/* ---------- canvas ---------- */
define('canvas-window', `
:host{display:flex;flex-direction:column;min-width:0;border-right:1px solid var(--line);background:var(--face)}
.tabs{display:flex;justify-content:space-between;height:25px;flex:none;background:#e8e8ea;border-bottom:2px solid var(--dark)}
.tab{height:21px;margin-top:2px;display:flex;align-items:center;gap:13px;background:var(--face);border:1px solid var(--line);border-width:1px 1px 0 0;padding:0 4px 0 3px}
.tab button{width:10px}.dd{width:12px}
.mid{flex:1;display:flex;min-height:0}
.view{flex:1;background:#c8c8c8;padding:0 77px 0 78px;display:flex}.page{flex:1;background:#fff}
.foot{display:flex;align-items:center;height:12px;flex:none;overflow:hidden;gap:9px;padding-left:4px}
.foot button{width:11px;height:12px;flex:none}.foot ramp-slider{margin:0 -3px}.foot scroll-rail{margin-left:-4px;margin-right:12px}`,
`<command-bar></command-bar><div class="tabs"><div class="tab"><span>New canvas</span>${B('Close canvas', 'close', 9)}</div>${B('Canvas list', 'sd', 10, 'btn dd')}</div>
<div class="mid"><div class="view"><div class="page"></div></div><scroll-rail grip style="--a:155;--t:195;--b:157"></scroll-rail></div>
<div class="foot"><ramp-slider label="Zoom" value="54">70.3</ramp-slider>${B('Zoom out', 'zout', 13)}${B('Zoom in', 'zin', 13)}${B('Fit', 'fit', 12)}<ramp-slider arc label="Rotation" value="50">0.0</ramp-slider>${B('Rotate left', 'rotl', 13)}${B('Rotate right', 'rotr', 13)}${B('Reset rotation', 'resetf', 13)}<scroll-rail row grip style="--a:65;--t:103;--b:67"></scroll-rail></div>`);

define('material-bar', `
:host{background:var(--dock);border-left:1px solid var(--line);min-width:0}
ul{display:flex;flex-direction:column;gap:4px;padding:2px 2px 0 1px}
button{width:34px;height:40px;background:var(--face);border:1px solid #989ca4}`,
`<dock-strip>${I('cr', 14)}${I('c1', 14)}</dock-strip><ul>${['All', 'Image', 'Color pattern', 'Monochrome', 'Manga', 'Effects', 'Background', 'Drawing', '3D', 'Pose'].map((t, i) => `<li>${B(t + ' materials', 'm' + (i + 1), 27)}</li>`).join('')}</ul>`);

/* ---------- right panels ---------- */
define('navigator-panel', `
.v{height:114px;margin-right:3px;background:#c8c8c8;border:1px solid var(--dark);display:grid;place-items:center}
.v>*{grid-area:1/1}.p{width:68px;height:91px;background:#fff}.r{width:94px;height:86px;border:1px solid #c22;border-top-width:2px;box-shadow:inset 0 0 0 1px #f5b5b5}
.row{display:flex;align-items:center;height:20px;gap:4px;padding:0 4px}.row button{width:16px}.row ramp-slider{margin-right:3px;width:90px}
.row:nth-of-type(2){margin-top:2px}
i{width:1px;height:14px;background:#c4c7cd;margin:0 1px}`,
`<div class="v"><div class="p"></div><div class="r"></div></div>
<div class="row"><ramp-slider label="Zoom" value="55">70.3</ramp-slider>${B('Zoom out', 'zout', 17)}${B('Zoom in', 'zin', 17)}${B('Fit', 'fit', 16)}<i></i>${B('Fit to navigator', 'win1', 18)}${B('Full size', 'win2', 17)}</div>
<div class="row"><ramp-slider arc label="Rotation" value="50">&nbsp;0.0</ramp-slider>${B('Rotate left', 'rotl', 18)}${B('Rotate right', 'rotr', 18)}${B('Reset rotation', 'resetf', 18)}<i></i>${B('Flip horizontal', 'fliph', 17)}${B('Flip vertical', 'flipv', 17)}</div>`);

define('layer-property-panel', `
:host{display:flex;height:116px;border-top:1px solid var(--dark)}
.m{flex:1;padding:1px 3px 0 4px}
.lg{display:flex;align-items:center;gap:3px;height:15px;white-space:nowrap}.lg::before{content:"";width:4px;height:1px;background:#cdd0d7}.lg::after{content:"";flex:1;height:1px;background:#cdd0d7}
.fx{margin:0 0 2px auto;width:86px;height:21px;display:flex;align-items:center;justify-content:space-around;padding:0}
drop-select{width:121px;margin:2px 0 0 12px;--indent:51px}
scroll-rail{width:13px;margin-right:2px}`,
`<div class="m"><div class="lg ms">Effect</div><div class="fx btn">${B('Border effect', 'tone', 16)}${B('Tone', 'check4', 20)}${B('Layer color', 'border', 18)}${B('More', 'arrow', 13)}</div><div class="lg ms">Expression color</div><drop-select swatch label="Expression color" value="Color"></drop-select></div><scroll-rail empty></scroll-rail>`);

define('layer-row', `
:host{display:flex;height:41px;border-bottom:1px solid #989ca4}
.e{width:20px;flex:none;border-right:1px solid #989ca4}.w{width:18px;flex:none;border-right:1px solid #989ca4;display:grid;place-items:center}
.m{flex:1;display:flex;align-items:center;gap:3px;padding-left:4px}
:host([on]) .m{background:linear-gradient(#d9ebf5,#bfd5e2);border:1px solid #a9cbe0;padding-left:2px}
.t{width:34px;height:34px;border:1px solid #000;background:#fff;margin:0 2px}
:host([on]) .t{width:38px;height:38px;margin:0;border:2px solid #000;padding:1px;background:linear-gradient(90deg,#555 5px,transparent 5px 27px,#555 27px) content-box,repeating-conic-gradient(#ccc 0 25%,#fff 0 50%) 0 0/8px 8px;outline:1px solid #fff;outline-offset:-3px}
.x{display:flex;flex-direction:column;line-height:18px}`,
`<button class="e" type="button" aria-label="Show layer">${I('eye', 14)}</button><div class="w"></div><div class="m"><div class="t"></div><div class="x ms"><slot></slot></div></div>`,
function (r) { if (this.hasAttribute('on')) r.querySelector('.w').innerHTML = I('edit', 15); });

define('layer-panel', `
:host{display:flex;flex-direction:column;flex:1;min-height:0}
.a{display:flex;align-items:center;height:20px;gap:6px;padding-right:5px}drop-select{width:101px}
.a input[type=range]{width:56px;flex:none;height:11px;background:linear-gradient(90deg,transparent,#bbb),repeating-conic-gradient(#ccc 0 25%,#fff 0 50%) 0 0/8px 8px;border:1px solid #bbb}
.a input::-webkit-slider-thumb{appearance:none;width:4px;height:18px;background:#d5d7db;border:1px solid var(--line)}
.a .v{flex:1;min-width:0;text-align:right}
.a spin-arrows{margin-left:-2px}
.b{display:flex;align-items:center;height:20px;margin-top:1px;gap:2px;padding-right:3px}
.k{width:38px;height:19px;flex:none;gap:6px}.k i{width:17px;height:15px;border:1px solid var(--line);background:var(--face)}.k.d{width:35px;gap:2px;background:none}
.g{display:flex;gap:2px;margin:0 1px 0 auto}.g button{width:18px}
.L{flex:1;display:flex;margin:2px 3px 0 3px;border:1px solid #989ca4;border-top:2px solid var(--dark);border-right:0;min-height:0}
.rows{flex:1}
.f{height:20px;display:flex;align-items:center;justify-content:space-between;padding:0 4px 0 0;flex:none}.f span{flex:1}.f button{width:20px}`,
`<div class="a"><drop-select label="Blending mode" value="Normal"></drop-select><input type="range" value="100" aria-label="Opacity"><input class="v ms" value="100" aria-label="Opacity value"><spin-arrows></spin-arrows></div>
<div class="b"><button type="button" class="btn k" aria-label="Palette color"><i></i>${I('arrow', 12)}</button><div class="g">${B('Clip to layer below', 'clip', 18)}${B('Reference layer', 'tower', 18)}${B('Lock layer', 'lock', 17)}${B('Lock transparent pixels', 'locka', 19)}</div><button type="button" class="btn k d" aria-label="Mask">${I('maskx', 18)}${I('arrowg', 12)}</button><button type="button" class="btn k d" aria-label="Ruler">${I('rulerx', 18)}${I('arrowg', 12)}</button></div>
<div class="L"><div class="rows"><layer-row on><span style="white-space:pre">100 %  Normal</span><span>Layer 1</span></layer-row><layer-row>${I('paper', 20)}<span style="line-height:14px">Paper</span></layer-row></div><scroll-rail empty></scroll-rail></div>
<div class="f">${B('Layer view', 'stack', 18)}<span></span>${B('New raster layer', 'sheet', 18)}${B('New layer', 'newcube', 18)}${B('New folder', 'folder', 18)}${B('Transfer down', 'xferg', 17)}${B('Merge down', 'xfer', 17)}${B('Create mask', 'mask', 17)}${B('Apply mask', 'applym', 17)}${B('Delete layer', 'trash', 18)}</div>`);

define('studio-app', `
:host{display:flex;flex-direction:column;height:100vh;min-height:640px;background:var(--dock);overflow:hidden}
main{flex:1;min-height:0;display:grid;grid-template-columns:40px 208px minmax(0,1fr) 37px 208px;gap:0 2px;padding:0 3px 3px 4px}
main>*{min-height:0}
.col{display:flex;flex-direction:column;gap:1px}
.grow{flex:1}
.left{--title-size:11px}
.wheel{width:16px;height:16px;border-radius:50%;background:radial-gradient(#fff 3px,transparent 3px),conic-gradient(from -60deg,red,yellow,lime,aqua,blue,magenta,red);margin:0 1px}
.wp{--pad:0}`,
`<title-bar></title-bar><menu-bar></menu-bar><main>
<tool-box></tool-box>
<div class="col left"><dock-strip><span></span>${I('cl', 14)}</dock-strip>
<panel-frame><cs-icon slot="title" name="nibtree" size="17"></cs-icon><span slot="title">Sub Tool [Pencil]</span><sub-tool-panel></sub-tool-panel></panel-frame>
<panel-frame class="grow"><cs-icon slot="title" name="nibgear" size="17"></cs-icon><span slot="title">Tool property [Darker pencil]</span><tool-property-panel></tool-property-panel></panel-frame>
<panel-frame class="wp"><div slot="title" class="wheel"></div>${[['bars', 'Color slider'], ['swatches', 'Color set'], ['mixtab', 'Intermediate color'], ['grids', 'Approximate color'], ['history', 'Color history'], ['film', 'Timeline']].map(a => `<side-tab slot="tabs" icon="${a[0]}" label="${a[1]}"></side-tab>`).join('')}<color-panel></color-panel></panel-frame></div>
<canvas-window></canvas-window>
<material-bar></material-bar>
<div class="col"><dock-strip>${I('cr', 14)}</dock-strip>
<panel-frame><cs-icon slot="title" name="navtab" size="18"></cs-icon><span slot="title">Navigator</span><side-tab slot="tabs" icon="picture" label="Sub view"></side-tab><side-tab slot="tabs" icon="info" label="Information"></side-tab><navigator-panel></navigator-panel></panel-frame>
<panel-frame><cs-icon slot="title" name="check" size="18"></cs-icon><span slot="title">Layer Property</span><side-tab slot="tabs" icon="stackg" label="Search layer"></side-tab><layer-property-panel></layer-property-panel></panel-frame>
<panel-frame class="grow"><cs-icon slot="title" name="stack" size="18"></cs-icon><span slot="title">Layer</span><side-tab slot="tabs" icon="cyc" label="History"></side-tab><side-tab slot="tabs" icon="clap" label="Auto action"></side-tab><layer-panel></layer-panel></panel-frame></div>
</main>`);
</script>
</body>
</html>
